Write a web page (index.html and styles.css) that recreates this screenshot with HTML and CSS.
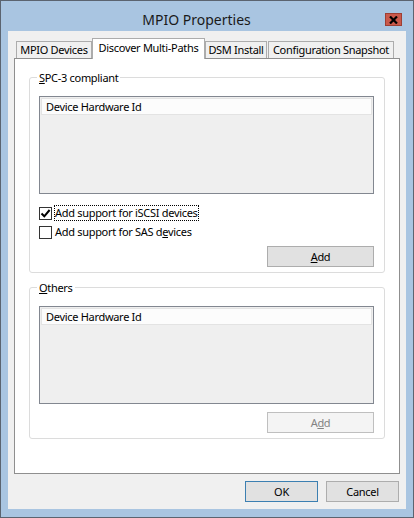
FILE: index.html
```html
<!DOCTYPE html>
<html lang="en">

<head>
    <meta charset="UTF-8">
    <meta name="viewport" content="width=device-width, initial-scale=1.0">
    <link rel="stylesheet" href="styles.css">
</head>

<body>
    <div class="window">
        <div class="titlebar">
            <div class="title">MPIO Properties</div>
            <div class="close">
                <svg width="9" height="8" viewBox="0 0 9 8">
                    <path d="M1 0.5 L8 7.5 M8 0.5 L1 7.5" stroke="#000" stroke-width="2.2" fill="none" />
                </svg>
            </div>
        </div>
        <div class="client">
            <div class="tabs">
                <div class="tab tab-devices">MPIO Devices</div>
                <div class="tab tab-discover active">Discover Multi-Paths</div>
                <div class="tab tab-dsm">DSM Install</div>
                <div class="tab tab-snapshot">Configuration Snapshot</div>
            </div>
            <div class="panel">
                <!-- SPC-3 -->
                <div class="group">
                    <div class="legend"><u>S</u>PC-3 compliant</div>
                    <div class="list">
                        <div class="list-head">Device Hardware Id</div>
                    </div>
                    <div class="check first">
                        <span class="box">
                            <svg width="11" height="11" viewBox="0 0 11 11">
                                <path d="M1.5 5.5 L4.3 8.3 L9.6 2" stroke="#000" stroke-width="2" fill="none" />
                            </svg>
                        </span>
                        <span class="focus">Add support for iSCSI devices</span>
                    </div>
                    <div class="check">
                        <span class="box"></span>
                        <span class="text">Add support for SAS d<u>e</u>vices</span>
                    </div>
                    <div class="actions">
                        <button class="btn add"><u>A</u>dd</button>
                    </div>
                </div>
                <!-- others -->
                <div class="group others">
                    <div class="legend"><u>O</u>thers</div>
                    <div class="list">
                        <div class="list-head">Device Hardware Id</div>
                    </div>
                    <div class="actions">
                        <button class="btn add disabled">A<u>d</u>d</button>
                    </div>
                </div>
            </div>
            <div class="footer">
                <button class="btn default">OK</button>
                <button class="btn">Cancel</button>
            </div>
        </div>
    </div>
</body>

</html>
```

FILE: styles.css
```css
* {
    box-sizing: border-box;
}

body {
    margin: 0;
    padding: 0;
    font-family: "Noto Sans", "Open Sans", sans-serif;
    font-size: 11px;
    letter-spacing: -0.3px;
    color: #000;
}

.window {
    width: 414px;
    height: 518px;
    border: 1px solid #5b6470;
    background: #a9c5e1;
    padding: 0 7px 8px;
    display: flex;
    flex-direction: column;
}

/* title bar */
.titlebar {
    height: 30px;
    display: flex;
    align-items: flex-start;
}

.title {
    flex: 1;
    text-align: center;
    font-size: 14px;
    line-height: 20px;
    letter-spacing: 0;
    padding-top: 9px;
    color: #1a1a1a;
}

.close {
    width: 17px;
    height: 13px;
    margin-top: 12px;
    margin-right: 4px;
    background: #c9594b;
    border: 1px solid #9e3f33;
    display: flex;
    align-items: center;
    justify-content: center;
}

/* client area */
.client {
    flex: 1;
    background: #f0f0f0;
    padding: 7px 6px 7px;
    display: flex;
    flex-direction: column;
}

.tabs {
    height: 20px;
    display: flex;
    align-items: flex-end;
    padding-left: 2px;
}

.tab {
    height: 17px;
    line-height: 16px;
    border: 1px solid #acacac;
    border-bottom: none;
    background: #f0f0f0;
    text-align: center;
    white-space: nowrap;
}

.tab.active {
    height: 21px;
    line-height: 17px;
    margin-bottom: -1px;
    background: #fff;
    position: relative;
    z-index: 1;
}

.tab-devices {
    width: 76px;
}

.tab-discover {
    width: 113px;
}

.tab-dsm {
    width: 62px;
}

.tab-snapshot {
    width: 126px;
    margin-left: 1px;
}

.panel {
    height: 416px;
    background: #fff;
    border: 1px solid #8f8f8f;
    display: flex;
    flex-direction: column;
}

/* group boxes */
.group {
    margin: 18px 14px 0;
    border: 1px solid #dcdcdc;
    border-radius: 3px;
    padding: 0 10px 5px 9px;
    display: flex;
    flex-direction: column;
}

.group.others {
    margin-top: 14px;
}

.legend {
    align-self: flex-start;
    margin: -8px 0 0 -2px;
    padding: 0 2px;
    line-height: 15px;
    background: #fff;
}

.list {
    margin-top: 11px;
    height: 98px;
    border: 1px solid #828790;
    background: #efefef;
    padding: 1px;
}

.list-head {
    height: 17px;
    line-height: 15px;
    padding-left: 4px;
    background: #fcfcfc;
    border: 1px solid #e3e3e3;
}

/* checkboxes */
.check {
    height: 16px;
    line-height: 16px;
    display: flex;
    align-items: center;
    margin-top: 3px;
}

.check.first {
    margin-top: 11px;
}

.box {
    width: 13px;
    height: 13px;
    border: 1px solid #333;
    background: #fff;
    margin-right: 2px;
    display: flex;
    align-items: center;
    justify-content: center;
}

.focus {
    border: 1px dotted #000;
    line-height: 14px;
}

.text {
    padding-left: 1px;
}

/* buttons */
.actions {
    display: flex;
    justify-content: flex-end;
    margin-top: 6px;
}

.others .actions {
    margin-top: 8px;
}

.btn {
    height: 21px;
    width: 73px;
    padding: 0;
    font-family: inherit;
    font-size: 11px;
    letter-spacing: -0.3px;
    line-height: 19px;
    color: #000;
    background: #e1e1e1;
    border: 1px solid #adadad;
    text-align: center;
}

.btn.add {
    width: 107px;
}

.btn.disabled {
    background: #f4f4f4;
    border-color: #bfbfbf;
    color: #838383;
}

.btn.default {
    border-color: #3c7fb1;
}

.footer {
    display: flex;
    justify-content: flex-end;
    gap: 8px;
    margin-top: 7px;
    padding-right: 1px;
}
```
